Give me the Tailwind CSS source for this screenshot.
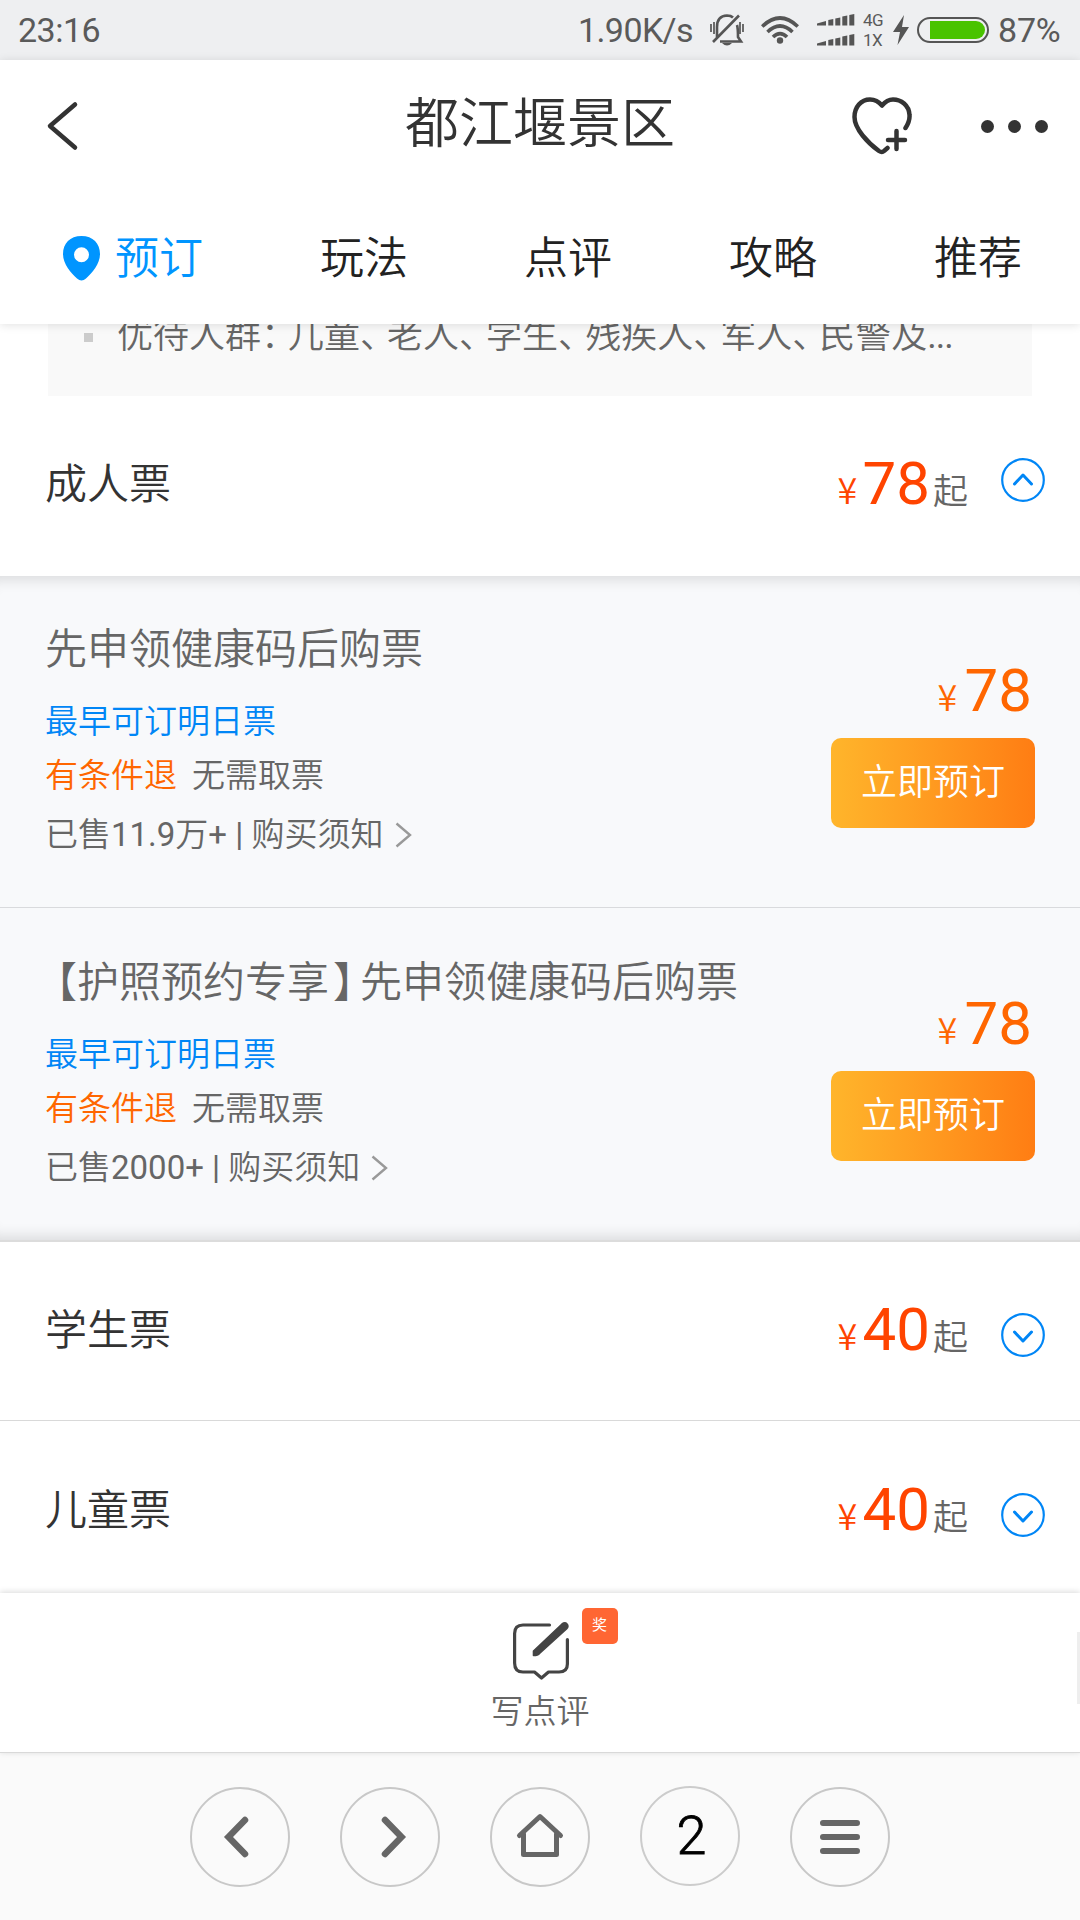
<!DOCTYPE html>
<html lang="zh-CN">
<head>
<meta charset="utf-8">
<title>都江堰景区</title>
<script src="https://cdn.jsdelivr.net/npm/@tailwindcss/browser@4"></script>
</head>
<body class="w-[1080px] h-[1920px] overflow-hidden bg-white font-['Roboto','Noto_Sans_CJK_SC',sans-serif] text-[#666] flex flex-col">

<!-- Status bar -->
<div class="h-[60px] shrink-0 bg-[#eeeff1] flex items-center pl-[18px] pr-[16px] text-[34px] leading-[60px] text-[#5a5a5a]">
  <span class="w-[83px] tracking-[-0.5px]">23:16</span>
  <span class="ml-auto w-[118px] tracking-[-0.6px] whitespace-nowrap">1.90K/s</span>
  <svg class="ml-[14px] w-[34px] h-[32px]" viewBox="0 0 34 32" fill="none" stroke="#555" stroke-width="2.600">
    <path d="M7 23V13Q7 2 17 1.500Q21 1.500 23 3.500M27 11Q28 14 28 23L31 27.500H10M3 28L29 1.500M7 21V24"/>
    <path d="M1 10v8M4 8v12M33 10v8M30 8v12" stroke-width="1.700"/>
    <path d="M12 29h10q-5 5-10 0z" fill="#555" stroke="none"/>
  </svg>
  <svg class="ml-[17px] w-[38px] h-[28px]" viewBox="0 0 38 28" fill="none" stroke="#555" stroke-width="3.600">
    <path d="M1.200 10.500Q19-6.500 36.800 10.500M6.500 16Q19 4 31.500 16M12 21Q19 14 26 21"/>
    <circle cx="19" cy="24.500" r="3.200" fill="#555" stroke="none"/>
  </svg>
  <svg class="ml-[18px] w-[38px] h-[32px]" viewBox="0 0 38 32" fill="#555">
    <path d="M0 11.500V9.500L9 7V11.500ZM11.300 11.500V6l5-1v6.500ZM18.300 11.500V4.500l5-1v8ZM25.300 11.500V2.500l5-1v10ZM32.300 11.500V1l5-1v11.500Z"/>
    <path transform="translate(0 20)" d="M0 11.500V9.500L9 7V11.500ZM11.300 11.500V6l5-1v6.500ZM18.300 11.500V4.500l5-1v8ZM25.300 11.500V2.500l5-1v10ZM32.300 11.500V1l5-1v11.500Z"/>
  </svg>
  <div class="ml-[8px] w-[22px] flex flex-col text-[17px] leading-[20px] tracking-[-0.5px]"><span>4G</span><span>1X</span></div>
  <svg class="ml-[8px] w-[16px] h-[30px]" viewBox="0 0 16 30" fill="#555"><path d="M11 0L0 17h7L4.500 30L16 12H9Z"/></svg>
  <div class="ml-[8px] w-[72px] h-[26px] rounded-full border-2 border-[#555] p-[2px] pl-[11px]"><div class="h-full bg-[#49c300] rounded-r-full"></div></div>
  <span class="ml-[9px] w-[66px] tracking-[-0.2px]">87%</span>
</div>

<!-- Header -->
<header class="relative z-10 h-[264px] shrink-0 bg-white shadow-[0_1px_9px_rgba(0,0,0,0.12)]">
  <div class="h-[132px] flex items-center text-[#333]">
    <svg class="ml-[46px] w-[34px] h-[50px]" viewBox="0 0 34 50" fill="none" stroke="#333" stroke-width="4.500" stroke-linecap="round" stroke-linejoin="round"><path d="M29 3.500L4 25L29 46.500"/></svg>
    <h1 class="ml-[325px] w-[275px] text-[54px] leading-[132px] font-[350] pb-[3px] whitespace-nowrap">都江堰景区</h1>
    <svg class="ml-[172px] w-[60px] h-[58px]" viewBox="0 0 60 58" fill="none" stroke="#333" stroke-width="4.500" stroke-linecap="round" stroke-linejoin="round">
      <path d="M53.500 31Q58 24 57.500 18C57 8 49 2.500 41 2.500Q35 2.500 30 8.500Q25 2.500 18 2.500C9 2.500 2.500 10 2.500 20C2.500 32 16 46 27 54Q30 56 32 54L35.500 51"/>
      <path d="M44.500 34v18M36 43h17"/>
    </svg>
    <div class="ml-[69px] flex gap-[14px]"><i class="size-[13px] rounded-full bg-[#333]"></i><i class="size-[13px] rounded-full bg-[#333]"></i><i class="size-[13px] rounded-full bg-[#333]"></i></div>
  </div>
  <nav class="h-[132px] flex items-center pl-[63px] text-[44px] leading-[132px] font-[350] text-[#222]">
    <svg class="w-[37px] h-[45px]" viewBox="0 0 37 45" fill="#0095ff"><path fill-rule="evenodd" d="M18.500 0C7 0 0 7.500 0 18C0 28 8 37 14 42.500Q18.500 46.500 23 42.500C29 37 37 28 37 18C37 7.500 30 0 18.500 0ZM18.500 11.300a7.500 7.500 0 1 1 0 15a7.500 7.500 0 1 1 0-15Z"/></svg>
    <span class="ml-[15px] pt-[2px] w-[205px] text-[#0095ff]">预订</span>
    <span class="pt-[2px] w-[204px]">玩法</span>
    <span class="pt-[2px] w-[205px]">点评</span>
    <span class="pt-[2px] w-[205px]">攻略</span>
    <span class="pt-[2px]">推荐</span>
  </nav>
</header>

<!-- Notice, scrolled partly under the header -->
<div class="mx-[48px] h-[72px] shrink-0 bg-[#f9f9f9] flex items-start pl-[36px]">
  <i class="mt-[9px] size-[9px] bg-[#ccc]"></i>
  <p class="ml-[24px] mt-[-12px] text-[36px] leading-[48px] font-[350] whitespace-nowrap">优待人群<span class="tracking-[-9px]">：</span>儿童<span class="tracking-[-9px]">、</span>老人<span class="tracking-[-9px]">、</span>学生<span class="tracking-[-9px]">、</span>残疾人<span class="tracking-[-9px]">、</span>军人<span class="tracking-[-9px]">、</span>民警及<span class="tracking-[-1px] font-normal">...</span></p>
</div>

<!-- Adult tickets -->
<section class="h-[180px] shrink-0 flex items-center pl-[45px] pr-[35px]">
  <h2 class="text-[42px] leading-[60px] font-[350] text-[#333] mt-[-2px]">成人票</h2>
  <div class="ml-auto mt-[4px] flex items-baseline leading-[70px] text-[#ff4400]"><span class="text-[36px] w-[25px] font-['Noto_Sans_CJK_SC'] font-[350]">¥</span><span class="text-[60px]">78</span><span class="ml-[3px] text-[35px] font-[350] text-[#666]">起</span></div>
  <svg class="ml-[33px] mt-[-12px] size-[44px]" viewBox="0 0 44 44" fill="none" stroke="#0086f6" stroke-width="2.200"><circle cx="22" cy="22" r="20.800"/><path d="M13.500 26L22 17L30.500 26" stroke-width="3" stroke-linecap="round" stroke-linejoin="round"/></svg>
</section>

<div class="h-[666px] shrink-0 bg-[#f8f9fb] flex flex-col shadow-[inset_0_16px_14px_-12px_rgba(0,0,0,0.12),inset_0_-16px_14px_-12px_rgba(0,0,0,0.12)] border-b-2 border-[#dcdcdc]">
  <article class="h-[332px] shrink-0 border-b border-[#d9dadd] flex justify-between pl-[45px] pr-[45px] font-[350]">
    <div class="pt-[44px] text-[33px]">
      <h3 class="text-[42px] leading-[60px]">先申领健康码后购票</h3>
      <p class="mt-[15px] leading-[54px] text-[#0086f6]">最早可订明日票</p>
      <p class="leading-[54px]"><span class="text-[#ff6600] mr-[15px]">有条件退</span>无需取票</p>
      <p class="mt-[5px] leading-[54px] flex items-center whitespace-pre">已售<span class="font-normal">11.9</span>万<span class="font-normal">+ | </span>购买须知<svg class="ml-[11px] w-[17px] h-[26px]" viewBox="0 0 17 26" fill="none" stroke="#999" stroke-width="2.400"><path d="M1.500 1.500L15 13L1.500 24.500"/></svg></p>
    </div>
    <div class="pt-[80px] flex flex-col items-end">
      <div class="flex items-baseline leading-[70px] h-[70px] text-[#ff6600] font-normal mr-[3px]"><span class="text-[36px] w-[27px] font-['Noto_Sans_CJK_SC'] font-[350]">¥</span><span class="text-[60px]">78</span></div>
      <button class="mt-[12px] w-[204px] h-[90px] rounded-[10px] bg-linear-to-r from-[#ffb52b] to-[#ff7d13] text-white text-[36px] leading-[91px] font-[350]">立即预订</button>
    </div>
  </article>
  <article class="h-[332px] shrink-0 flex justify-between pl-[45px] pr-[45px] font-[350]">
    <div class="pt-[45px] text-[33px]">
      <h3 class="text-[42px] leading-[60px] whitespace-nowrap"><span class="ml-[-10px]">【</span>护照预约专享<span class="ml-[4px] tracking-[-15px]">】</span>先申领健康码后购票</h3>
      <p class="mt-[15px] leading-[54px] text-[#0086f6]">最早可订明日票</p>
      <p class="leading-[54px]"><span class="text-[#ff6600] mr-[15px]">有条件退</span>无需取票</p>
      <p class="mt-[5px] leading-[54px] flex items-center whitespace-pre">已售<span class="font-normal">2000+ | </span>购买须知<svg class="ml-[11px] w-[17px] h-[26px]" viewBox="0 0 17 26" fill="none" stroke="#999" stroke-width="2.400"><path d="M1.500 1.500L15 13L1.500 24.500"/></svg></p>
    </div>
    <div class="pt-[81px] flex flex-col items-end">
      <div class="flex items-baseline leading-[70px] h-[70px] text-[#ff6600] font-normal mr-[3px]"><span class="text-[36px] w-[27px] font-['Noto_Sans_CJK_SC'] font-[350]">¥</span><span class="text-[60px]">78</span></div>
      <button class="mt-[12px] w-[204px] h-[90px] rounded-[10px] bg-linear-to-r from-[#ffb52b] to-[#ff7d13] text-white text-[36px] leading-[91px] font-[350]">立即预订</button>
    </div>
  </article>
</div>

<!-- Student tickets -->
<section class="h-[179px] shrink-0 border-b border-[#d9d9d9] flex items-center pl-[45px] pr-[35px]">
  <h2 class="text-[42px] leading-[60px] font-[350] text-[#333]">学生票</h2>
  <div class="ml-auto mt-[7px] flex items-baseline leading-[70px] text-[#ff4400]"><span class="text-[36px] w-[25px] font-['Noto_Sans_CJK_SC'] font-[350]">¥</span><span class="text-[60px]">40</span><span class="ml-[3px] text-[35px] font-[350] text-[#666]">起</span></div>
  <svg class="ml-[33px] mt-[8px] size-[44px]" viewBox="0 0 44 44" fill="none" stroke="#0086f6" stroke-width="2.200"><circle cx="22" cy="22" r="20.800"/><path d="M13.500 19L22 28L30.500 19" stroke-width="3" stroke-linecap="round" stroke-linejoin="round"/></svg>
</section>

<!-- Child tickets -->
<section class="h-[172px] shrink-0 pt-[7px] flex items-center pl-[45px] pr-[35px]">
  <h2 class="text-[42px] leading-[60px] font-[350] text-[#333]">儿童票</h2>
  <div class="ml-auto mt-[7px] flex items-baseline leading-[70px] text-[#ff4400]"><span class="text-[36px] w-[25px] font-['Noto_Sans_CJK_SC'] font-[350]">¥</span><span class="text-[60px]">40</span><span class="ml-[3px] text-[35px] font-[350] text-[#666]">起</span></div>
  <svg class="ml-[33px] mt-[8px] size-[44px]" viewBox="0 0 44 44" fill="none" stroke="#0086f6" stroke-width="2.200"><circle cx="22" cy="22" r="20.800"/><path d="M13.500 19L22 28L30.500 19" stroke-width="3" stroke-linecap="round" stroke-linejoin="round"/></svg>
</section>

<!-- Write a review -->
<div class="relative h-[160px] shrink-0 bg-white border-b border-[#d9d9d9] shadow-[0_-1px_6px_rgba(0,0,0,0.15)] flex flex-col items-center">
  <svg class="mt-[28px] ml-[2px] w-[58px] h-[60px]" viewBox="0 0 58 60" fill="none" stroke="#444" stroke-width="3.200" stroke-linecap="round" stroke-linejoin="round">
    <path d="M37.500 4H11Q2.600 4 2.600 12.500V42Q2.600 51 11 51H22.500L29.500 57L36.500 51H47Q55.400 51 55.400 43V18.500"/>
    <path d="M21.500 34.500V30L50 3Q53 .8 55 3Q57 5.500 54.500 8L27.500 32.500Q26 34.500 21.500 34.500Z" fill="#444" stroke-width="1.600"/>
  </svg>
  <span class="text-[33px] leading-[48px] mt-[7px] font-[350]">写点评</span>
  <span class="absolute left-[582px] top-[15px] size-[36px] rounded-[5px] bg-[#ff6633] text-white text-[15px] leading-[34px] pr-px text-center">奖</span>
  <i class="absolute right-0 top-[39px] w-[3px] h-[72px] bg-[#eee]"></i>
</div>

<!-- Browser toolbar -->
<div class="grow bg-[#fafafa] flex justify-center gap-[50px] pt-[34px]">
  <div class="size-[100px] rounded-full border-2 border-[#c8c8c8]"><svg class="size-[96px]" viewBox="2 2 96 96" fill="none" stroke="#666" stroke-width="6.500" stroke-linecap="round"><path d="M55 33L38.500 50L55 67"/></svg></div>
  <div class="size-[100px] rounded-full border-2 border-[#c8c8c8]"><svg class="size-[96px]" viewBox="2 2 96 96" fill="none" stroke="#666" stroke-width="6.500" stroke-linecap="round"><path d="M45 33L61.500 50L45 67"/></svg></div>
  <div class="size-[100px] rounded-full border-2 border-[#c8c8c8]"><svg class="size-[96px]" viewBox="2 2 96 96" fill="none" stroke="#666" stroke-width="5" stroke-linecap="round" stroke-linejoin="round"><path d="M29.500 48.500L50 29.500L70.500 48.500M33.500 47V67.500H66.500V47"/></svg></div>
  <div class="size-[100px] -mt-px rounded-full border-2 border-[#ccc] text-center text-black text-[54px] leading-[96px] font-[350] [-webkit-text-stroke:0.8px_#000] pl-[3px]">2</div>
  <div class="size-[100px] rounded-full border-2 border-[#c8c8c8]"><svg class="size-[96px]" viewBox="2 2 96 96" fill="none" stroke="#666" stroke-width="6" stroke-linecap="round"><path d="M33 36H67M33 50H67M33 64H67"/></svg></div>
</div>
</body>
</html>
